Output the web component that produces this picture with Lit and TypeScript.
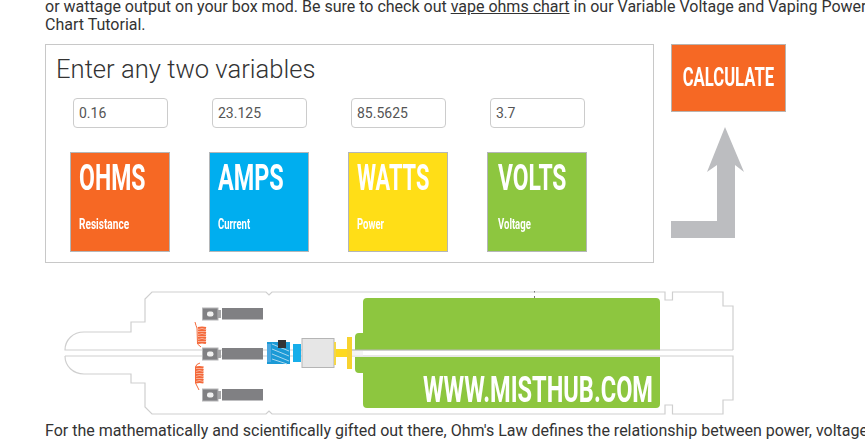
import { LitElement, html, css, svg } from "lit";
import { customElement } from "lit/decorators.js";

const tiles = [
  { cls: "ohms", name: "OHMS", sub: "Resistance", val: "0.16", scale: 0.64, subScale: 0.72 },
  { cls: "amps", name: "AMPS", sub: "Current", val: "23.125", scale: 0.65, subScale: 0.68 },
  { cls: "watts", name: "WATTS", sub: "Power", val: "85.5625", scale: 0.605, subScale: 0.68 },
  { cls: "volts", name: "VOLTS", sub: "Voltage", val: "3.7", scale: 0.635, subScale: 0.68 },
];

const terminal = (y: number) => svg`
  <rect x="202.5" y="${y}" width="15.5" height="12" fill="#808083" stroke="#b5b5b7" stroke-width="1"/>
  <rect x="207" y="${y + 3.5}" width="6.5" height="5" rx="2.2" fill="#f0f0f0"/>
  <rect x="218" y="${y + 2}" width="3" height="8" fill="#a5a5a7"/>
  <rect x="222" y="${y}" width="41" height="11.5" fill="#808083"/>`;

const coil = (x: number, y: number) => {
  let d = "";
  for (let i = 0; i < 7; i++) d += `M${x} ${y + i * 2.5}q4 -1.2 8 0`;
  return svg`<path d="${d}" fill="none" stroke="#f4693a" stroke-width="2"/>`;
};

@customElement("app-root")
export class AppRoot extends LitElement {
  static styles = css`
    :host {
      display: block;
      width: 865px;
      height: 439px;
      overflow: hidden;
      background: #fff;
      font-family: Roboto, sans-serif;
      font-size: 16px;
      color: #333;
    }
    .page {
      padding-left: 45px;
      display: flex;
      flex-direction: column;
    }
    p {
      margin: 0;
      line-height: 18px;
      white-space: nowrap;
    }
    .intro {
      margin-top: -2px;
    }
    .intro a {
      color: inherit;
      text-decoration: underline;
    }
    .calc {
      display: flex;
      gap: 17px;
      margin-top: 10px;
    }
    .panel {
      box-sizing: border-box;
      width: 609px;
      height: 219px;
      border: 1px solid #c8c8c8;
      padding: 6px 0 0 10px;
    }
    h2 {
      margin: 0;
      font-size: 25.6px;
      font-weight: 300;
      line-height: 36px;
      color: #333;
    }
    .fields {
      display: grid;
      grid-template-columns: repeat(4, 95px);
      column-gap: 44px;
      margin: 11px 0 0 17px;
    }
    input {
      box-sizing: border-box;
      width: 95px;
      height: 30px;
      border: 1px solid #ccc;
      border-radius: 4px;
      padding: 0 5px 1px;
      font: 14px Roboto, sans-serif;
      color: #555;
      background: #fff;
      outline: none;
    }
    .tiles {
      display: grid;
      grid-template-columns: repeat(4, 100px);
      column-gap: 39px;
      margin: 24px 0 0 14px;
    }
    .tile {
      box-sizing: border-box;
      height: 100px;
      border: 1px solid #b4b6b8;
      color: #fff;
      padding: 0 0 0 8px;
      display: flex;
      flex-direction: column;
      overflow: hidden;
    }
    .ohms { background: #f66824; }
    .amps { background: #00aeef; }
    .watts { background: #ffde17; }
    .volts { background: #8dc63f; padding-left: 10px; }
    .name {
      font-size: 36px;
      font-weight: 700;
      line-height: 50px;
      transform-origin: left center;
      white-space: nowrap;
      filter: blur(0.3px);
    }
    .sub {
      font-size: 14px;
      font-weight: 700;
      line-height: 18px;
      margin-top: 12px;
      transform-origin: left center;
      white-space: nowrap;
      filter: blur(0.3px);
    }
    .side {
      width: 115px;
      display: flex;
      flex-direction: column;
    }
    .go {
      box-sizing: border-box;
      height: 68px;
      background: #f66824;
      border: 1px solid #b9b3ae;
      color: #fff;
      padding-bottom: 2px;
      display: flex;
      align-items: center;
      justify-content: center;
    }
    .go span {
      font-size: 26px;
      font-weight: 700;
      transform: scaleX(0.64);
      white-space: nowrap;
      display: block;
      filter: blur(0.3px);
    }
    .arrow {
      display: block;
      margin-top: 15px;
    }
    .diagram {
      display: block;
      margin: 22px 0 0 -45px;
      filter: blur(0.35px);
    }
    .outro {
      margin-top: 2px;
    }
    .brand {
      font-family: Roboto, sans-serif;
      font-weight: 700;
      font-size: 37px;
      fill: #fff;
    }
  `;

  render() {
    return html`<div class="page">
      <p class="intro">or wattage output on your box mod. Be sure to check out <a href="#">vape ohms chart</a> in our Variable Voltage and Vaping Power<br />Chart Tutorial.</p>
      <div class="calc">
        <div class="panel">
          <h2>Enter any two variables</h2>
          <div class="fields">
            ${tiles.map((t) => html`<input type="text" .value=${t.val} />`)}
          </div>
          <div class="tiles">
            ${tiles.map(
              (t) => html`<div class="tile ${t.cls}">
                <div class="name" style="transform: scaleX(${t.scale})">${t.name}</div>
                <div class="sub" style="transform: scaleX(${t.subScale})">${t.sub}</div>
              </div>`
            )}
          </div>
        </div>
        <div class="side">
          <div class="go"><span>CALCULATE</span></div>
          <svg class="arrow" width="73" height="111" viewBox="671 127 73 111">
            <path d="M725 127L744 172L735 165V238H671V221H717V165L707 172Z" fill="#bcbdc0"/>
          </svg>
        </div>
      </div>
      ${this.diagram()}
      <p class="outro">For the mathematically and scientifically gifted out there, Ohm's Law defines the relationship between power, voltage</p>
    </div>`;
  }

  diagram() {
    return html`<svg class="diagram" width="865" height="135" viewBox="0 285 865 135">
      <g fill="none" stroke="#cfcfcf" stroke-width="1.2">
        <path d="M733 350V306H723V292H672.5V300H665V292H272L269 295L266 292H152L145 299V322H131V332H84C73 332 65 340 65 350H733"/>
        <path d="M65 356C65 366 73 374 84 374H131V383H145V407L152 414H266L269 411L272 414H665V405H672.5V414H723V400H733V356H65"/>
      </g>
      <path d="M534.5 291v1.5M534.5 296v3" stroke="#777" stroke-width="1"/>
      <path d="M367 298H656Q660 298 660 302V350H355V337Q355 333 359 333H363V302Q363 298 367 298Z" fill="#8dc63f"/>
      <path d="M355 357H660V404Q660 408 656 408H367Q363 408 363 404V373H359Q355 373 355 369Z" fill="#8dc63f"/>
      <path d="M352 350H660" stroke="#b9b9b9" stroke-width="1" fill="none"/>
      <rect x="351" y="351" width="12" height="4.5" fill="#f4f4f4"/>
      ${terminal(308)} ${terminal(348)} ${terminal(389)}
      ${coil(198, 328)} ${coil(195.5, 367.5)}
      <path d="M195 322Q196 326 197 328L197.5 344L201 347M200 363Q196 364 195.5 367L195.5 383L199 390" fill="none" stroke="#f4693a" stroke-width="1"/>
      <rect x="267" y="342" width="23" height="22" fill="#1b9ad6"/>
      <rect x="267" y="344" width="4" height="18" fill="#4ba8e0"/>
      <path d="M272 344l17 7M272 349l17 7M272 354l17 7M272 359l15 5" stroke="#a8d8f0" stroke-width="1"/>
      <rect x="278" y="340" width="8" height="8" fill="#333336"/>
      <rect x="293" y="344" width="8" height="18" fill="#17aeea"/>
      <rect x="302" y="338.5" width="32" height="29" fill="#e6e6e6" stroke="#b5b5b5"/>
      <rect x="334" y="342" width="2" height="23" fill="#f3d64a"/>
      <rect x="336" y="349" width="11" height="8" fill="#fdd91f"/>
      <rect x="347" y="337" width="5" height="32" fill="#f7d22f"/>
      <text class="brand" x="423" y="402" textLength="230" lengthAdjust="spacingAndGlyphs">WWW.MISTHUB.COM</text>
    </svg>`;
  }
}
